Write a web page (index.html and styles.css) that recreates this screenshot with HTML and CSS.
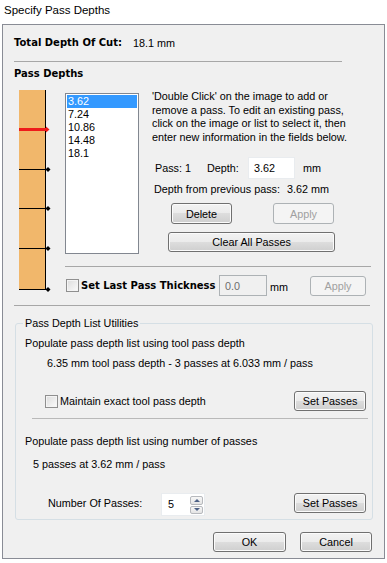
FILE: index.html
```html
<!DOCTYPE html>
<html>
  <head>
    <title>Specify Pass Depths</title>
    <link rel="stylesheet" href="styles.css">
  </head>
  <body>
    <div class="title">Specify Pass Depths</div>

    <div class="dialog">
      <div class="total">
        <span class="total-label">Total Depth Of Cut:</span>
        <span>18.1 mm</span>
      </div>
      <div class="sep sep-top"></div>
      <div class="heading">Pass Depths</div>

      <div class="main">
        <svg class="ruler" width="32" height="206" viewBox="0 0 32 206">
          <rect x="0" y="2" width="27" height="199" fill="#f1b76b" />
          <rect x="26" y="2" width="1" height="200" fill="#000" />
          <rect x="0" y="40" width="28" height="3" fill="#ee1b1b" />
          <polygon points="27,38.5 30.5,41.5 27,44.5" fill="#ee1b1b" />
          <rect x="0" y="81" width="27" height="1" fill="#000" />
          <rect x="0" y="120" width="27" height="1" fill="#000" />
          <rect x="0" y="160" width="27" height="1" fill="#000" />
          <rect x="0" y="201" width="27" height="1" fill="#000" />
          <polygon points="29,79 31.5,81.5 29,84 26.5,81.5" fill="#000" />
          <polygon points="29,118 31.5,120.5 29,123 26.5,120.5" fill="#000" />
          <polygon points="29,158 31.5,160.5 29,163 26.5,160.5" fill="#000" />
          <polygon points="29,199 31.5,201.5 29,204 26.5,201.5" fill="#000" />
        </svg>

        <div class="main-right">
          <div class="upper">
            <ul class="list">
              <li class="selected">3.62</li>
              <li>7.24</li>
              <li>10.86</li>
              <li>14.48</li>
              <li>18.1</li>
            </ul>

            <div class="info">
              <div class="help">
                'Double Click' on the image to add or<br>
                remove a pass. To edit an existing pass,<br>
                click on the image or list to select it, then<br>
                enter new information in the fields below.
              </div>
              <div class="pass-row">
                <span class="pass-label">Pass: 1</span>
                <span class="depth-label">Depth:</span>
                <span class="field depth-field">3.62</span>
                <span class="unit">mm</span>
              </div>
              <div class="prev-row">
                <span class="prev-label">Depth from previous pass:</span>
                <span>3.62 mm</span>
              </div>
              <div class="btn-row">
                <button class="btn btn-delete">Delete</button>
                <button class="btn btn-apply" disabled>Apply</button>
              </div>
              <button class="btn btn-clear">Clear All Passes</button>
            </div>
          </div>

          <div class="sep sep-short"></div>

          <div class="last-row">
            <span class="check"></span>
            <span class="last-label">Set Last Pass Thickness</span>
            <span class="field field-disabled last-field">0.0</span>
            <span class="last-unit">mm</span>
            <button class="btn btn-last" disabled>Apply</button>
          </div>
        </div>
      </div>

      <div class="sep sep-wide"></div>

      <fieldset class="group">
        <legend>Pass Depth List Utilities</legend>
        <div class="g-title">Populate pass depth list using tool pass depth</div>
        <div class="g-note g-note-tool">6.35 mm tool pass depth - 3 passes at 6.033 mm / pass</div>
        <div class="g-row g-row-tool">
          <span class="check check-small"></span>
          <span class="g-check-label">Maintain exact tool pass depth</span>
          <button class="btn btn-set">Set Passes</button>
        </div>
        <div class="sep sep-group"></div>
        <div class="g-title g-title-num">Populate pass depth list using number of passes</div>
        <div class="g-note g-note-num">5 passes at 3.62 mm / pass</div>
        <div class="g-row g-row-num">
          <span class="num-label">Number Of Passes:</span>
          <span class="spin">
            <span class="spin-value">5</span>
            <span class="spin-arrows">
              <span class="spin-btn"><span class="tri-up"></span></span>
              <span class="spin-btn"><span class="tri-down"></span></span>
            </span>
          </span>
          <button class="btn btn-set">Set Passes</button>
        </div>
      </fieldset>

      <div class="footer">
        <button class="btn btn-ok">OK</button>
        <button class="btn btn-cancel">Cancel</button>
      </div>
    </div>
  </body>
</html>
```

FILE: styles.css
```css
body { margin: 0; background: #fff; color: #000; font-family: "Liberation Sans", Arial, sans-serif; font-size: 10.8px; line-height: 14px; }

.title { height: 24px; box-sizing: border-box; padding: 1px 0 0 4px; font-size: 11.5px; line-height: 18px; }

.dialog { margin-left: 2px; width: 383px; height: 535px; box-sizing: border-box; border: 1px solid #898c95; background: #f0f0f0; padding: 11px 0 0 11px; }

.total { display: flex; height: 14px; }
.total-label { flex: none; width: 119px; font-family: "DejaVu Sans", Verdana, sans-serif; font-weight: bold; font-size: 10px; }

.sep { height: 0; border-top: 1px solid #a7a7a7; }
.sep-top { margin-top: 11px; width: 328px; }
.sep-short { margin-top: 12px; width: 306px; }
.sep-wide { margin-top: 9px; width: 356px; }
.sep-group { margin: 7px 0 0 16px; width: 336px; border-top-color: #b9b9b9; }

.heading { margin-top: 5px; height: 14px; font-family: "DejaVu Sans", Verdana, sans-serif; font-weight: bold; font-size: 10px; }

.main { display: flex; align-items: flex-start; margin: 7px 0 0 5px; }
.ruler { display: block; flex: none; }
.main-right { margin-left: 14px; }

.upper { display: flex; align-items: flex-start; margin-top: 2px; }

.list { list-style: none; margin: 3px 0 0 0; padding: 1px; width: 74px; height: 161px; box-sizing: border-box; border: 1px solid #828790; background: #fff; }
.list > li { height: 13px; line-height: 13px; padding-left: 1px; }
.list > li.selected { background: #3399ff; color: #fff; }

.info { margin-left: 13px; }
.help { line-height: 13.5px; white-space: nowrap; }

.pass-row { display: flex; align-items: center; height: 22px; margin-top: 13px; }
.pass-label { margin-left: 3px; width: 52px; }
.depth-label { width: 41px; }
.unit { margin-left: 8px; }

.field { box-sizing: border-box; height: 22px; line-height: 20px; padding-left: 5px; background: #fff; border: 1px solid #e9ecef; }
.depth-field { width: 47px; }
.field-disabled { background: #f0f0f0; border-color: #adb2b5; color: #6d6d6d; }

.prev-row { display: flex; margin-top: 3px; padding-left: 2px; }
.prev-label { width: 133px; }

.btn { box-sizing: border-box; height: 20px; padding: 0; font-family: "Liberation Sans", Arial, sans-serif; font-size: 10.8px; color: #000; border: 1px solid #707070; border-radius: 3px; background: linear-gradient(#f2f2f2 0%, #ebebeb 50%, #dddddd 50%, #cfcfcf 100%); box-shadow: inset 0 0 0 1px #fbfbfb; }
.btn:disabled { color: #a0a0a0; border-color: #adb2b5; background: #f4f4f4; box-shadow: none; }

.btn-row { display: flex; margin-top: 7px; }
.btn-delete { margin-left: 19px; width: 61px; height: 21px; }
.btn-apply { margin-left: 41px; width: 61px; height: 21px; }
.btn-clear { display: block; margin: 8px 0 0 16px; width: 167px; }

.last-row { display: flex; align-items: center; height: 21px; margin-top: 8px; }
.check { flex: none; width: 13px; height: 13px; box-sizing: border-box; margin-left: 1px; border: 1px solid #8f8f8f; background: linear-gradient(135deg, #dcdcdc, #fbfbfb); box-shadow: inset 0 0 0 1px #f4f4f4; }
.last-label { flex: none; margin-left: 2px; width: 138px; font-family: "DejaVu Sans", Verdana, sans-serif; font-weight: bold; font-size: 10px; white-space: nowrap; }
.last-field { width: 48px; height: 21px; }
.last-unit { margin-left: 3px; width: 40px; padding-top: 3px; }
.btn-last { width: 56px; }

.group { margin: 10px 0 0 1px; padding: 0 0 3px 0; width: 358px; box-sizing: border-box; border: 1px solid #d5dfe5; border-radius: 3px; min-inline-size: 0; }
.group > legend { margin-left: 7px; padding: 0 2px; line-height: 14px; }

.g-title { margin: 6px 0 0 9px; }
.g-title-num { margin-top: 15px; }
.g-note { margin-top: 6px; }
.g-note-tool { margin-left: 31px; }
.g-note-num { margin: 9px 0 0 17px; }

.g-row { display: flex; align-items: center; }
.g-row-tool { margin-top: 21px; height: 20px; }
.g-row-tool .check { margin-left: 29px; }
.g-check-label { margin-left: 2px; }
.btn-set { margin: 0 6px 0 auto; width: 72px; }

.g-row-num { margin-top: 22px; align-items: flex-start; }
.num-label { margin-left: 32px; width: 113px; line-height: 20px; }
.spin { display: flex; width: 44px; height: 23px; box-sizing: border-box; background: #fff; border: 1px solid #e9ecef; }
.spin-value { flex: 1; padding-left: 6px; line-height: 20px; }
.spin-arrows { display: flex; flex-direction: column; margin: 2px 1px 0 0; width: 13px; }
.spin-btn { display: flex; align-items: center; justify-content: center; height: 8px; margin-bottom: 1px; border: 1px solid #b7b9bd; border-radius: 2px; background: linear-gradient(#f7f7f7, #e4e4e4); }
.tri-up { width: 0; height: 0; border-left: 3px solid transparent; border-right: 3px solid transparent; border-bottom: 3px solid #4d6185; }
.tri-down { width: 0; height: 0; border-left: 3px solid transparent; border-right: 3px solid transparent; border-top: 3px solid #4d6185; }

.footer { display: flex; margin-top: 12px; }
.btn-ok { margin-left: 199px; width: 73px; }
.btn-cancel { margin-left: 14px; width: 72px; }
```
